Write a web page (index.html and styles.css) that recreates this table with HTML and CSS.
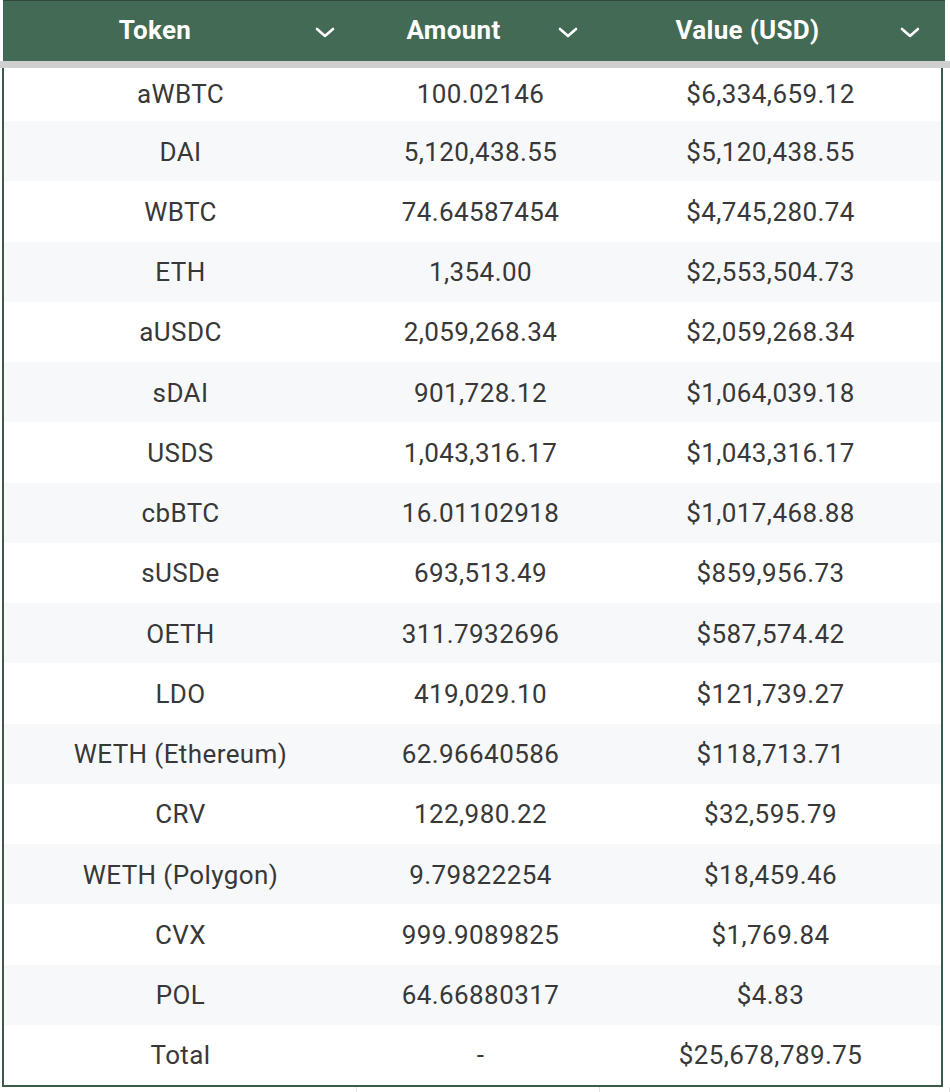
FILE: index.html
```html
<!DOCTYPE html>
<html>
<head>
<meta charset="utf-8">
<link rel="stylesheet" href="styles.css">
</head>
<body>
<div class="sheet">
  <div class="head">
    <div class="hcell"><span class="htext">Token</span><svg class="chev" viewBox="0 0 20 11"><path d="M2 2 L10 9 L18 2" /></svg></div>
    <div class="hcell"><span class="htext">Amount</span><svg class="chev" viewBox="0 0 20 11"><path d="M2 2 L10 9 L18 2" /></svg></div>
    <div class="hcell last"><span class="htext">Value (USD)</span><svg class="chev" viewBox="0 0 20 11"><path d="M2 2 L10 9 L18 2" /></svg></div>
  </div>
  <div class="freeze"></div>
  <div class="body">
    <div class="row first"><div>aWBTC</div><div>100.02146</div><div>$6,334,659.12</div></div>
    <div class="row"><div>DAI</div><div>5,120,438.55</div><div>$5,120,438.55</div></div>
    <div class="row"><div>WBTC</div><div>74.64587454</div><div>$4,745,280.74</div></div>
    <div class="row"><div>ETH</div><div>1,354.00</div><div>$2,553,504.73</div></div>
    <div class="row"><div>aUSDC</div><div>2,059,268.34</div><div>$2,059,268.34</div></div>
    <div class="row"><div>sDAI</div><div>901,728.12</div><div>$1,064,039.18</div></div>
    <div class="row"><div>USDS</div><div>1,043,316.17</div><div>$1,043,316.17</div></div>
    <div class="row"><div>cbBTC</div><div>16.01102918</div><div>$1,017,468.88</div></div>
    <div class="row"><div>sUSDe</div><div>693,513.49</div><div>$859,956.73</div></div>
    <div class="row"><div>OETH</div><div>311.7932696</div><div>$587,574.42</div></div>
    <div class="row"><div>LDO</div><div>419,029.10</div><div>$121,739.27</div></div>
    <div class="row"><div>WETH (Ethereum)</div><div>62.96640586</div><div>$118,713.71</div></div>
    <div class="row"><div>CRV</div><div>122,980.22</div><div>$32,595.79</div></div>
    <div class="row"><div>WETH (Polygon)</div><div>9.79822254</div><div>$18,459.46</div></div>
    <div class="row"><div>CVX</div><div>999.9089825</div><div>$1,769.84</div></div>
    <div class="row"><div>POL</div><div>64.66880317</div><div>$4.83</div></div>
    <div class="row"><div>Total</div><div>-</div><div>$25,678,789.75</div></div>
  </div>
  <div class="below">
    <div class="gcell"></div><div class="gcell"></div><div class="gcell"></div>
  </div>
</div>
</body>
</html>
```
FILE: styles.css
```css
html, body {
  margin: 0;
  padding: 0;
  background: #ffffff;
}
.sheet {
  width: 950px;
  height: 1092px;
  overflow: hidden;
  font-family: Roboto, "Liberation Sans", sans-serif;
}
.head {
  margin-left: 3px;
  width: 942px;
  height: 60px;
  background: #436a54;
  border-top: 1px solid #2f4a3b;
  display: grid;
  grid-template-columns: 354px 243px 345px;
}
.hcell {
  position: relative;
  display: flex;
  align-items: center;
  justify-content: center;
  padding-right: 50px;
  color: #ffffff;
  font-weight: 700;
  font-size: 26px;
  letter-spacing: 0.3px;
}
.htext {
  margin-top: -2px;
}
.chev {
  position: absolute;
  right: 22px;
  top: 26px;
  width: 20px;
  height: 11px;
  fill: none;
  stroke: #ffffff;
  stroke-width: 2.6;
  stroke-linecap: round;
  stroke-linejoin: round;
}
.hcell.last .chev {
  right: 25px;
}
.freeze {
  height: 7px;
  background: #cfcfcf;
}
.body {
  margin-left: 2px;
  width: 937px;
  border-left: 2px solid #3c5a49;
  border-right: 2px solid #3c5a49;
  border-bottom: 2px solid #3c5a49;
  display: grid;
  grid-template-rows: 53px repeat(16, 60.25px);
}
.row {
  display: grid;
  grid-template-columns: 353px 243px 341px;
  align-items: center;
  font-size: 26px;
  letter-spacing: 0.4px;
  color: #383838;
}
.row:nth-child(even) {
  background: #f7f8fa;
}
.row > div {
  text-align: center;
  padding-top: 1px;
}
.row > div:nth-child(2) {
  padding-left: 4px;
}
.row.first > div {
  padding-top: 0;
  margin-top: -1px;
}
.below {
  display: grid;
  grid-template-columns: 357px 243px 350px;
  height: 6px;
}
.gcell {
  border-right: 1px solid #e2e2e2;
}
```
